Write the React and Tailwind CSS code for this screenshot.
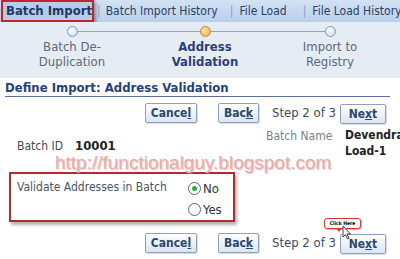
import React from "react";

const font = "font-['DejaVu_Sans_Condensed','DejaVu_Sans',sans-serif]";

const Btn = ({ w, pre, key_, post }) => (
  <button
    className={`${w} h-[20px] shrink-0 whitespace-nowrap rounded-[2px] border border-[#8da2b9] bg-gradient-to-b from-[#ffffff] to-[#d9e6f3] text-center text-[12px] leading-none font-bold text-[#2b4670] shadow-[1px_1px_1px_rgba(0,0,0,0.15)] ${font}`}
  >
    {pre}
    <span className="underline">{key_}</span>
    {post}
  </button>
);

const ButtonRow = ({ withCallout }) => (
  <div className="flex h-[20px] items-center whitespace-nowrap pl-[145px]">
    <Btn w="w-[52px]" pre="Cance" key_="l" post="" />
    <div className="w-[21px] shrink-0" />
    <Btn w="w-[41px]" pre="Bac" key_="k" post="" />
    <span className="ml-[13px] w-[68px] shrink-0 text-[13px] text-[#3b4a5e]">Step 2 of 3</span>
    <div className="relative shrink-0">
      <Btn w="w-[46px]" pre="Ne" key_="x" post="t" />
      {withCallout && (
        <>
          <div className="absolute left-[-16px] top-[-13px] h-[11px] w-[37px] rounded-[3px] border border-[#d8343a] bg-white text-center text-[5px] leading-[9px] font-bold text-black shadow-[1px_1px_1px_rgba(0,0,0,0.25)] whitespace-nowrap">
            Click Here
          </div>
          <div className="absolute left-[-4px] top-[-3px] h-0 w-0 border-x-[3px] border-t-[4px] border-x-transparent border-t-[#d8343a]" />
          <svg
            className="absolute left-[2px] top-[-6px]"
            width="10"
            height="16"
            viewBox="0 0 10 16"
          >
            <path
              d="M1 1 L1 12 L3.5 9.5 L5.5 14 L7 13.3 L5 9 L8.5 9 Z"
              fill="#fff"
              stroke="#333"
              strokeWidth="0.9"
            />
          </svg>
        </>
      )}
    </div>
  </div>
);

const Step = ({ label1, label2, state }) => {
  const dot =
    state === "active"
      ? "bg-[radial-gradient(circle_at_35%_35%,#ffe2b0,#f3a33a)] border-[#d0872b]"
      : "bg-[radial-gradient(circle_at_35%_35%,#ffffff,#c4d6ea)] border-[#7f9ab8]";
  const text =
    state === "active" ? "font-bold text-[#2b3f78]" : "text-[#5c6878]";
  return (
    <div className="flex flex-col items-center">
      <div className={`relative z-10 mt-[4px] h-[11px] w-[11px] rounded-full border ${dot}`} />
      <div className={`mt-[2px] whitespace-nowrap text-center text-[13px] leading-[15px] ${text}`}>
        {label1}
        <br />
        {label2}
      </div>
    </div>
  );
};

export default function App() {
  return (
    <div className={`h-[259px] w-[400px] overflow-hidden bg-white ${font}`}>
      {/* tab bar */}
      <div className="flex h-[22px] items-center whitespace-nowrap bg-gradient-to-b from-[#d3e2f4] to-[#b9cfea] text-[12px] text-[#2a3f66]">
        <div className="ml-[1px] flex h-[22px] w-[93px] shrink-0 items-center border-2 border-[#c8232b] bg-[#b6cde9] pl-[3px] text-[13px] font-bold text-[#1f3668] shadow-[2px_2px_3px_rgba(0,0,0,0.35)]">
          Batch Import
        </div>
        <span className="ml-[3px] text-[#8aa0bd]">|</span>
        <span className="ml-[5px]">Batch Import History</span>
        <span className="ml-[12px] text-[#8aa0bd]">|</span>
        <span className="ml-[6px]">File Load</span>
        <span className="ml-[16px] text-[#8aa0bd]">|</span>
        <span className="ml-[6px]">File Load History</span>
      </div>

      {/* train */}
      <div className="relative h-[56px] bg-[#e6ecf4]">
        <div className="absolute left-[72px] top-[9px] h-[1px] w-[258px] bg-[#8fa6c2]" />
        <div className="grid grid-cols-[144px_122px_128px]">
          <Step label1="Batch De-" label2="Duplication" state="done" />
          <Step label1="Address" label2="Validation" state="active" />
          <Step label1="Import to" label2="Registry" state="todo" />
        </div>
      </div>

      {/* heading */}
      <div className="mx-[5px] mr-[10px] border-b border-[#5d6f96] pt-[2px] pb-[1px] text-[13px] leading-[15px] font-bold whitespace-nowrap text-[#24417a]">
        Define Import: Address Validation
      </div>

      <div className="mt-[6px]">
        <ButtonRow />
      </div>

      {/* info */}
      <div className="relative mt-[6px] h-[24px] text-[12px] whitespace-nowrap">
        <div className="flex items-baseline pl-[17px] pt-[7px]">
          <span className="w-[58px] text-[#3f4a58]">Batch ID</span>
          <span className="text-[13px] font-bold text-[#222]">10001</span>
        </div>
        <div className="absolute left-[266px] top-[-2px] flex items-start">
          <span className="w-[79px] text-[#7a828c]">Batch Name</span>
          <span className="font-bold leading-[16px] text-[#222]">
            Devendra
            <br />
            Load-1
          </span>
        </div>
      </div>

      {/* watermark */}
      <div className="whitespace-nowrap pl-[55px] font-['Liberation_Sans',sans-serif] text-[19px] leading-[19px] text-[#f0a8ab] [text-shadow:1px_1px_1px_rgba(150,150,150,0.5)]">
        http://functionalguy.blogspot.com
      </div>

      {/* validate box */}
      <div className="ml-[9px] flex h-[50px] w-[226px] whitespace-nowrap border-2 border-[#b8282e] pl-[6px] pt-[4px] text-[12px] shadow-[2px_3px_3px_rgba(0,0,0,0.3)]">
        <span className="w-[171px] shrink-0 text-[#4a5567]">Validate Addresses in Batch</span>
        <div className="flex flex-col gap-[6px] pt-[3px] text-[13px] leading-[15px] text-[#333]">
          <label className="flex items-center gap-[2px]">
            <span className="flex h-[13px] w-[13px] items-center justify-center rounded-full border border-[#4d6a8e] bg-white">
              <span className="h-[5px] w-[5px] rounded-full bg-[#2eaa3a]" />
            </span>
            No
          </label>
          <label className="flex items-center gap-[2px]">
            <span className="h-[13px] w-[13px] rounded-full border border-[#4d6a8e] bg-white" />
            Yes
          </label>
        </div>
      </div>

      <div className="mt-[11px]">
        <ButtonRow withCallout />
      </div>
    </div>
  );
}
